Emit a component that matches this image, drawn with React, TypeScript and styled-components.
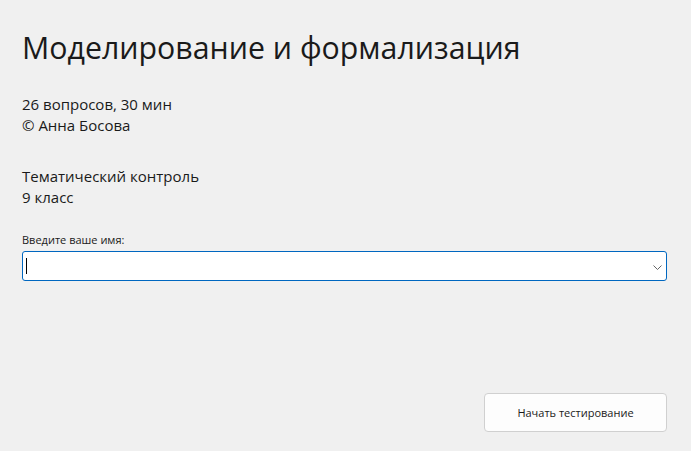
import React from 'react';
import styled, { createGlobalStyle } from 'styled-components';

const Global = createGlobalStyle`
  html, body {
    margin: 0;
    padding: 0;
    background: #f0f0f0;
  }
  body {
    font-family: "Open Sans", "Noto Sans", sans-serif;
    color: #1a1a1a;
  }
`;

const Page = styled.div`
  width: 691px;
  height: 451px;
  box-sizing: border-box;
  padding: 26px 24px 20px 22px;
  display: flex;
  flex-direction: column;
`;

const Title = styled.h1`
  margin: 0;
  font-size: 30.3px;
  font-weight: 400;
  line-height: 44px;
`;

const Info = styled.div<{ $top: number }>`
  margin-top: ${p => p.$top}px;
  font-size: 15px;
  line-height: 21px;
`;

const Label = styled.label`
  display: block;
  margin-top: 24px;
  font-size: 11px;
  line-height: 16px;
`;

const Field = styled.div`
  margin-top: 3px;
  height: 30px;
  box-sizing: border-box;
  background: #fff;
  border: 1px solid #0067c0;
  border-radius: 3px;
  display: flex;
  align-items: center;
  padding: 0 4px 0 3px;
`;

const Caret = styled.span`
  width: 1px;
  height: 16px;
  background: #000;
`;

const Chevron = styled.svg`
  margin-left: auto;
  margin-top: 3px;
  width: 9px;
  height: 5px;
`;

const Footer = styled.div`
  margin-top: auto;
  margin-bottom: -1px;
  display: flex;
  justify-content: flex-end;
`;

const Button = styled.button`
  width: 183px;
  height: 39px;
  background: #fdfdfd;
  border: 1px solid #d0d0d0;
  border-radius: 4px;
  font-family: inherit;
  font-size: 11px;
  color: #1a1a1a;
`;

export default function App() {
  return (
    <>
      <Global />
      <Page>
        <Title>Моделирование и формализация</Title>
        <Info $top={24}>
          26 вопросов, 30 мин
          <br />© Анна Босова
        </Info>
        <Info $top={30}>
          Тематический контроль
          <br />9 класс
        </Info>
        <Label>Введите ваше имя:</Label>
        <Field>
          <Caret />
          <Chevron viewBox="0 0 9 5">
            <path d="M0.5 0.5 L4.5 4.5 L8.5 0.5" fill="none" stroke="#666" strokeWidth="1" />
          </Chevron>
        </Field>
        <Footer>
          <Button>Начать тестирование</Button>
        </Footer>
      </Page>
    </>
  );
}
